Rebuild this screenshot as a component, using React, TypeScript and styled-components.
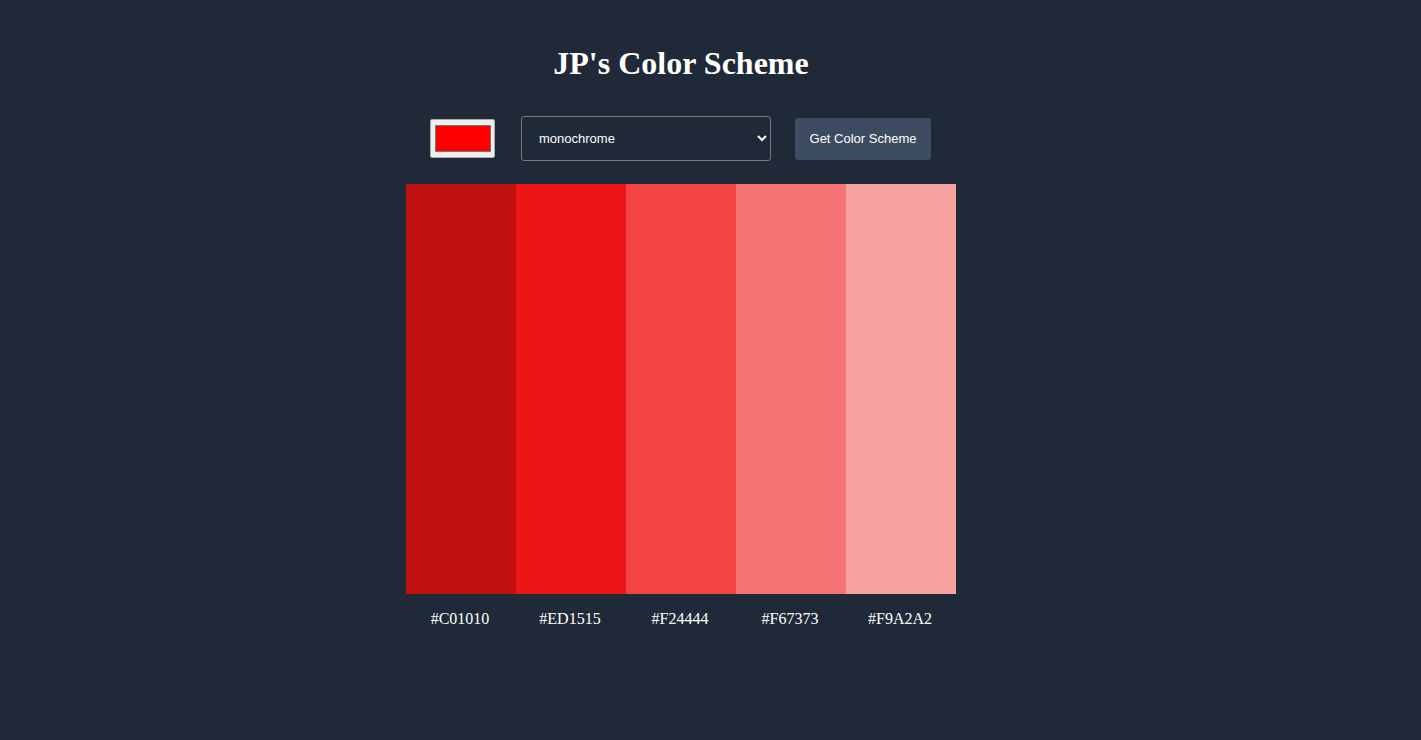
import React, { useState } from "react"
import styled, { createGlobalStyle } from "styled-components"

const GlobalStyle = createGlobalStyle`
  html, body {
    margin: 0;
    padding: 0;
    background-color: #1f2937;
    color: #ffffff;
    font-family: "Liberation Serif", "Times New Roman", serif;
  }
`

const Page = styled.main`
  min-height: 740px;
  display: flex;
  justify-content: center;
  padding-right: 59px;
  box-sizing: border-box;
`

const Container = styled.div`
  width: 550px;
  display: flex;
  flex-direction: column;
  align-items: center;
`

const Title = styled.h1`
  margin: 43px 0 0;
  font-size: 32px;
  font-weight: bold;
  line-height: 40px;
`

const Controls = styled.form`
  align-self: flex-start;
  margin: 33px 0 0 24px;
  display: flex;
  align-items: center;
  gap: 24px;
  height: 45px;
`

const ColorPicker = styled.input`
  -webkit-appearance: none;
  appearance: none;
  width: 65px;
  height: 39px;
  padding: 0;
  margin: 0 2px 0 0;
  box-sizing: border-box;
  background-color: #efefef;
  border: 1px solid #a9a9a9;
  border-radius: 2px;
  cursor: pointer;

  &::-webkit-color-swatch-wrapper {
    padding: 5px 3px 5px 4px;
  }

  &::-webkit-color-swatch {
    border: 1px solid #777777;
    border-radius: 0;
  }
`

const ModeSelect = styled.select`
  width: 250px;
  height: 45px;
  margin: 0;
  padding: 0 8px 0 13px;
  box-sizing: border-box;
  background-color: #1f2937;
  color: #ffffff;
  border: 1px solid #767a80;
  border-radius: 3px;
  font-family: "Liberation Sans", Arial, sans-serif;
  font-size: 13px;
`

const SubmitButton = styled.button`
  width: 136px;
  height: 42px;
  border: none;
  border-radius: 3px;
  background-color: #3d4b60;
  color: #ffffff;
  font-family: "Liberation Sans", Arial, sans-serif;
  font-size: 13px;
  cursor: pointer;
`

const Palette = styled.div`
  margin-top: 23px;
  display: grid;
  grid-template-columns: repeat(5, 110px);
`

const Column = styled.div`
  display: flex;
  flex-direction: column;
  align-items: center;
`

const Swatch = styled.div<{ $color: string }>`
  width: 110px;
  height: 410px;
  background-color: ${(p) => p.$color};
`

const HexLabel = styled.span`
  margin-top: 15px;
  margin-right: 2px;
  font-size: 16px;
  line-height: 20px;
`

const modes = [
  "monochrome",
  "monochrome-dark",
  "monochrome-light",
  "analogic",
  "complement",
  "analogic-complement",
  "triad",
  "quad",
]

const scheme = ["#C01010", "#ED1515", "#F24444", "#F67373", "#F9A2A2"]

export default function App() {
  let [seed, setSeed] = useState("#ff0000")
  let [mode, setMode] = useState("monochrome")

  return (
    <>
      <GlobalStyle />
      <Page>
        <Container>
          <Title>JP's Color Scheme</Title>
          <Controls onSubmit={(e) => e.preventDefault()}>
            <ColorPicker
              type="color"
              value={seed}
              onChange={(e) => setSeed(e.target.value)}
            />
            <ModeSelect value={mode} onChange={(e) => setMode(e.target.value)}>
              {modes.map((m) => (
                <option key={m} value={m}>
                  {m}
                </option>
              ))}
            </ModeSelect>
            <SubmitButton type="submit">Get Color Scheme</SubmitButton>
          </Controls>
          <Palette>
            {scheme.map((hex) => (
              <Column key={hex}>
                <Swatch $color={hex} />
                <HexLabel>{hex}</HexLabel>
              </Column>
            ))}
          </Palette>
        </Container>
      </Page>
    </>
  )
}
